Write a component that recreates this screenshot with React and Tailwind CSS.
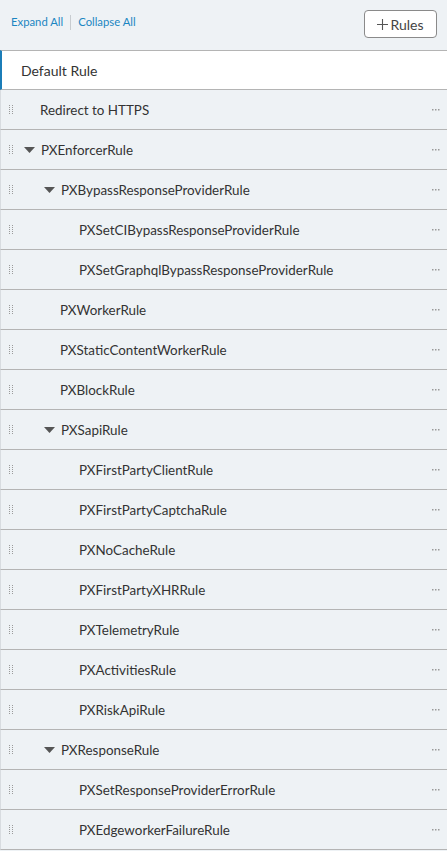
import React from "react";

const rows = [
  { t: "Redirect to HTTPS", l: 0 },
  { t: "PXEnforcerRule", l: 0, c: true },
  { t: "PXBypassResponseProviderRule", l: 1, c: true },
  { t: "PXSetCIBypassResponseProviderRule", l: 2 },
  { t: "PXSetGraphqlBypassResponseProviderRule", l: 2 },
  { t: "PXWorkerRule", l: 1 },
  { t: "PXStaticContentWorkerRule", l: 1 },
  { t: "PXBlockRule", l: 1 },
  { t: "PXSapiRule", l: 1, c: true },
  { t: "PXFirstPartyClientRule", l: 2 },
  { t: "PXFirstPartyCaptchaRule", l: 2 },
  { t: "PXNoCacheRule", l: 2 },
  { t: "PXFirstPartyXHRRule", l: 2 },
  { t: "PXTelemetryRule", l: 2 },
  { t: "PXActivitiesRule", l: 2 },
  { t: "PXRiskApiRule", l: 2 },
  { t: "PXResponseRule", l: 1, c: true },
  { t: "PXSetResponseProviderErrorRule", l: 2 },
  { t: "PXEdgeworkerFailureRule", l: 2 },
];

const padMap = ["pl-[39px]", "pl-[59px]", "pl-[78px]"];
const caretPad = ["pl-[23px]", "pl-[43px]", "pl-[63px]"];

function Handle() {
  return (
    <svg width="4" height="10" viewBox="0 0 4 10" className="absolute left-[8px] top-[15px]">
      {[0, 2, 4, 6, 8].map((y) => (
        <g key={y}>
          <rect x="0" y={y} width="1" height="1" fill="#9a9a9a" />
          <rect x="3" y={y} width="1" height="1" fill="#9a9a9a" />
        </g>
      ))}
    </svg>
  );
}

function Dots() {
  return (
    <svg width="8" height="2" viewBox="0 0 8 2" className="absolute right-[7px] top-[19px]">
      <rect x="0" y="0" width="1.5" height="1.5" fill="#9a9a9a" />
      <rect x="3" y="0" width="1.5" height="1.5" fill="#9a9a9a" />
      <rect x="6" y="0" width="1.5" height="1.5" fill="#9a9a9a" />
    </svg>
  );
}

function Caret() {
  return (
    <svg width="11" height="6" viewBox="0 0 11 6" className="mr-[6px]">
      <path d="M0 0 L11 0 L5.5 6 Z" fill="#555" />
    </svg>
  );
}

export default function App() {
  return (
    <div className="w-[447px] h-[851px] bg-[#eef2f5] overflow-hidden" style={{ fontFamily: "Lato, 'Open Sans', sans-serif" }}>
      <div className="h-[50px] flex items-center justify-between pl-[11px] pr-[10px]">
        <div className="flex items-center text-[11.3px] text-[#1b86c2] -mt-[6px]">
          <span>Expand All</span>
          <span className="mx-[7px] w-px h-[15px] bg-[#c8ccd0]" />
          <span>Collapse All</span>
        </div>
        <button className="w-[73px] h-[28px] -mt-[2px] border border-[#8a8a8a] rounded-[4px] bg-white text-[14px] text-[#444] flex items-center justify-center">
          <svg width="11" height="11" viewBox="0 0 11 11" className="mr-[2px]">
            <path d="M5.5 0 V11 M0 5.5 H11" stroke="#555" strokeWidth="1.1" />
          </svg>
          Rules
        </button>
      </div>
      <div className="h-[40px] bg-white border-t border-b border-[#b4b4b4] border-l-2 border-l-[#1b7db8] flex items-center pl-[19px] pt-[1px] text-[14px] text-[#333]">
        Default Rule
      </div>
      {rows.map((r, i) => (
        <div
          key={i}
          className={`relative h-[40px] border-b border-[#b4b4b4] border-l border-l-[#d8dce0] flex items-center pt-[1px] text-[13.4px] text-[#333] ${r.c ? caretPad[r.l] : padMap[r.l]}`}
        >
          <Handle />
          {r.c && <Caret />}
          <span>{r.t}</span>
          <Dots />
        </div>
      ))}
    </div>
  );
}
